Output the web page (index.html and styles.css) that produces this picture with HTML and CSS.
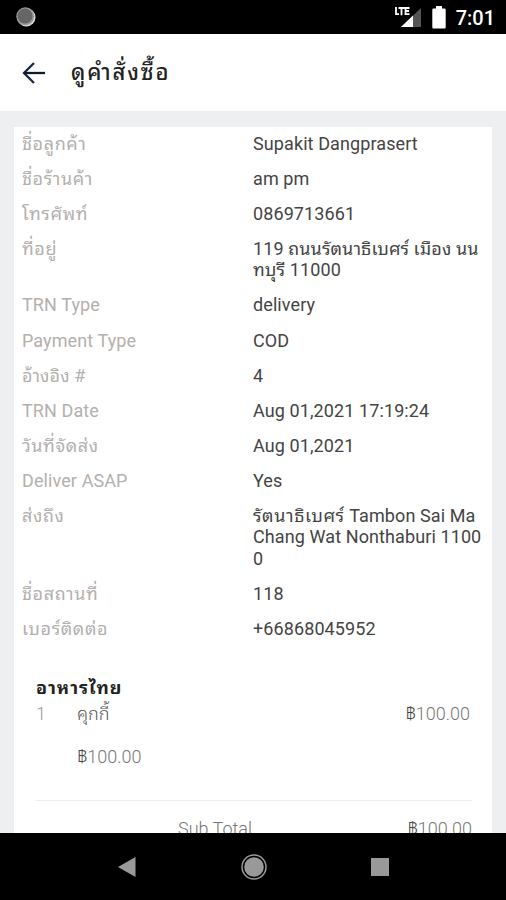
FILE: index.html
```html
<!DOCTYPE html>
<html lang="th">
    <head>
        <meta charset="utf-8">
        <title>ดูคำสั่งซื้อ</title>
        <link rel="stylesheet" href="styles.css">
    </head>
    <body>
        <div class="status-bar">
            <svg class="status-dot" width="20" height="20" viewBox="0 0 20 20">
                <circle cx="10.3" cy="10.3" r="9.2" fill="#ddd"/>
                <circle cx="9.3" cy="9.3" r="9" fill="#999"/>
                <circle cx="9" cy="9" r="7.5" fill="#666"/>
            </svg>
            <div class="status-icons">
                <svg width="28" height="22" viewBox="0 0 28 22">
                    <path d="M27 2v19H7z" fill="#555"/>
                    <path d="M19 9.6V21H7z" fill="#fff"/>
                    <path d="M0 0h17v10H0z" fill="#000"/>
                    <path d="M2 1v7.2h3M4.5 2h6M7.5 2v7.2M15.5 2h-4v6.2h4M11.5 5h3.5" fill="none" stroke="#fff" stroke-width="1.8"/>
                </svg>
                <svg width="14" height="23" viewBox="0 0 14 23">
                    <path d="M4 0h6v2.5h2.5q1.2 0 1.2 1.2v17.6q0 1.2-1.2 1.2h-11q-1.2 0-1.2-1.2V3.7q0-1.2 1.2-1.2H4z" fill="#fff"/>
                </svg>
                <span class="time">7:01</span>
            </div>
        </div>
        <div class="header">
            <svg width="24" height="22" viewBox="0 0 24 22" fill="none" stroke="#17294a" stroke-width="2.3">
                <path d="M12 1L2 11l10 10"/>
                <path d="M2 11h21" stroke="#101a2c"/>
            </svg>
            <h1>ดูคำสั่งซื้อ</h1>
        </div>
        <div class="content">
            <div class="card">
                <div class="row"><span class="label thai">ชื่อลูกค้า</span><span class="value">Supakit Dangprasert</span></div>
                <div class="row"><span class="label thai">ชื่อร้านค้า</span><span class="value">am pm</span></div>
                <div class="row"><span class="label thai">โทรศัพท์</span><span class="value">0869713661</span></div>
                <div class="row"><span class="label thai">ที่อยู่</span><span class="value">119 ถนนรัตนาธิเบศร์ เมือง นน<br>ทบุรี 11000</span></div>
                <div class="row"><span class="label">TRN Type</span><span class="value">delivery</span></div>
                <div class="row"><span class="label">Payment Type</span><span class="value">COD</span></div>
                <div class="row"><span class="label">อ้างอิง #</span><span class="value">4</span></div>
                <div class="row"><span class="label">TRN Date</span><span class="value">Aug 01,2021 17:19:24</span></div>
                <div class="row"><span class="label thai">วันที่จัดส่ง</span><span class="value">Aug 01,2021</span></div>
                <div class="row"><span class="label">Deliver ASAP</span><span class="value">Yes</span></div>
                <div class="row"><span class="label thai">ส่งถึง</span><span class="value"><span class="thai">รัตนาธิเบศร์</span> Tambon Sai Ma<br>Chang Wat Nonthaburi 1100<br>0</span></div>
                <div class="row"><span class="label thai">ชื่อสถานที่</span><span class="value">118</span></div>
                <div class="row"><span class="label thai">เบอร์ติดต่อ</span><span class="value">+66868045952</span></div>

                <div class="items">
                    <h2>อาหารไทย</h2>
                    <div class="item">
                        <span class="qty">1</span>
                        <span class="name">คุกกี้</span>
                        <span class="price"><span class="baht">฿</span>100.00</span>
                    </div>
                    <div class="unit-price"><span class="baht">฿</span>100.00</div>
                    <div class="total">
                        <span>Sub Total</span>
                        <span><span class="baht">฿</span>100.00</span>
                    </div>
                </div>
            </div>
        </div>
        <div class="nav-bar">
            <svg width="18" height="20" viewBox="0 0 18 20"><path d="M0 10L17.5 0v20z" fill="#999"/></svg>
            <svg width="26" height="26" viewBox="0 0 26 26">
                <circle cx="13" cy="13" r="12" fill="none" stroke="#999" stroke-width="1.5"/>
                <circle cx="13" cy="13" r="9.8" fill="#999"/>
            </svg>
            <svg width="18" height="18" viewBox="0 0 18 18"><path d="M0 0h18v18H0z" fill="#999"/></svg>
        </div>
    </body>
</html>
```
FILE: styles.css
```css
            * {
                box-sizing: border-box;
            }
            body {
                margin: 0;
                height: 900px;
                display: flex;
                flex-direction: column;
                overflow: hidden;
                font-family: Roboto, "Noto Sans Thai Looped", Loma, Garuda, Waree, Umpush, "Noto Sans", sans-serif;
                font-size: 18px;
                background: #fff;
            }
            svg {
                display: block;
                flex: none;
            }
            .status-bar {
                height: 34px;
                flex: none;
                display: flex;
                justify-content: space-between;
                align-items: center;
                padding: 0 11px 0 16px;
                background: #000;
            }
            .status-dot {
                margin-bottom: 1px;
            }
            .status-icons {
                display: flex;
                align-items: center;
                gap: 10px;
                color: #fff;
            }
            .time {
                font-size: 20px;
                font-weight: 500;
                line-height: 34px;
                padding-top: 1px;
            }
            .header {
                height: 77px;
                flex: none;
                display: flex;
                align-items: center;
                gap: 25px;
                padding: 0 22px;
            }
            .header h1 {
                margin: 0;
                font-size: 22px;
                font-weight: 500;
                line-height: 30px;
                letter-spacing: 1.9px;
                color: #222;
            }
            .content {
                flex: 1;
                min-height: 0;
                overflow: hidden;
                padding: 16px 14px 0;
                background: #edeff1;
            }
            .card {
                height: 800px;
                background: #fff;
            }
            .row {
                display: flex;
                padding: 5.7px 8px 8.3px;
                line-height: 21.15px;
                letter-spacing: 0.1px;
            }
            .label {
                width: 231px;
                flex: none;
                color: #b3b0ae;
            }
            .value {
                color: #444;
                white-space: nowrap;
            }
            .thai {
                letter-spacing: 0.6px;
            }
            .items {
                padding: 27.5px 20px 0 22px;
                color: #777;
                font-weight: 300;
            }
            .items h2 {
                margin: 0;
                font-size: 18px;
                font-weight: bold;
                line-height: 26px;
                letter-spacing: 1px;
                color: #222;
            }
            .item {
                display: flex;
                line-height: 26px;
            }
            .qty {
                width: 41px;
                color: #999;
            }
            .name {
                flex: 1;
                color: #555;
            }
            .price {
                padding-right: 2px;
            }
            .baht {
                color: #444;
            }
            .unit-price {
                padding: 17.5px 0 30px 41px;
                line-height: 26px;
            }
            .total {
                display: flex;
                justify-content: space-between;
                padding: 15px 0 0 142px;
                border-top: 1px solid #eee;
                line-height: 26px;
            }
            .nav-bar {
                height: 67px;
                flex: none;
                display: flex;
                align-items: center;
                justify-content: space-between;
                padding: 0 117px 0 118px;
                background: #000;
            }
```
